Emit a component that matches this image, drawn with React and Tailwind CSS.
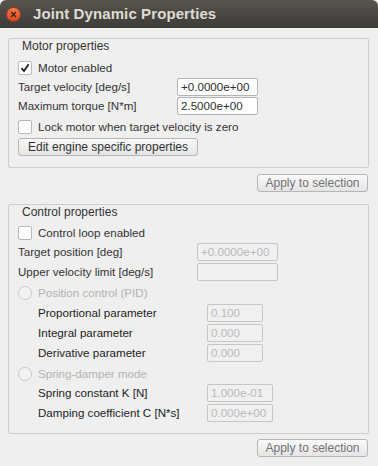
import React from "react";

const font = { fontFamily: '"Liberation Sans", Arial, sans-serif' };

// 复选框
function CheckBox({ checked }) {
    return (
        <span className="w-[14px] h-[14px] shrink-0 bg-white border border-[#b9b9b9] rounded-[2px] flex items-center justify-center">
            {checked && (
                <svg width="10" height="10" viewBox="0 0 10 10">
                    <path d="M1.5 5.2 L4 8 L8.6 1.2" fill="none" stroke="#1e1e1e" strokeWidth="1.8" />
                </svg>
            )}
        </span>
    );
}

function Radio() {
    return <span className="w-[14px] h-[14px] shrink-0 rounded-full border border-[#c9c9c9] bg-[#f3f3f3]" />;
}

function Field({ value, disabled, width = "w-[81px]" }) {
    return (
        <div
            className={`${width} h-[18px] rounded-[2px] border flex items-center px-[3px] text-[11.6px] leading-none ${
                disabled ? "border-[#c6c6c6] bg-[#f0f0f0] text-[#b9b9b9]" : "border-[#b3b3b3] bg-white text-[#2e2e2e]"
            }`}
        >
            {value}
        </div>
    );
}

function Button({ children, className = "", muted }) {
    return (
        <div
            className={`h-[18px] rounded-[3px] border border-[#b6b6b6] bg-gradient-to-b from-[#fafafa] to-[#e4e4e4] flex items-center justify-center text-[12px] leading-none ${
                muted ? "text-[#727272]" : "text-[#333]"
            } ${className}`}
        >
            {children}
        </div>
    );
}

function Row({ label, children, mt, indent, labelClass = "text-[#333]" }) {
    return (
        <div className={`flex items-center h-[18px] ${mt}`}>
            <span className={`text-[11.6px] ${indent ? "pl-[20px]" : ""} ${labelClass}`}>{label}</span>
            {children}
        </div>
    );
}

export default function App() {
    return (
        <div className="w-[378px] h-[466px] bg-[#efefef] flex flex-col" style={font}>
            {/* 标题栏 */}
            <div className="h-[28px] rounded-t-[6px] bg-gradient-to-b from-[#57544e] to-[#3d3c38] flex items-center">
                <div className="ml-[6px] w-[15px] h-[15px] rounded-full bg-gradient-to-b from-[#f37b4c] to-[#d9461a] border border-[#a8391a] flex items-center justify-center">
                    <svg width="7" height="7" viewBox="0 0 7 7">
                        <path d="M1 1 L6 6 M6 1 L1 6" stroke="#3b2118" strokeWidth="1.2" />
                    </svg>
                </div>
                <span className="ml-[12px] text-[15px] font-bold text-[#dfdbd2] tracking-[0.1px]">Joint Dynamic Properties</span>
            </div>

            <div className="pl-[8px] pr-[9px] pt-[10px] flex flex-col">
                {/* Motor properties */}
                <div className="border border-[#cdcdcd] rounded-[2px] pl-[9px] pr-[9px] pb-[11px] flex flex-col">
                    <div className="h-[14px] flex items-center pl-[4px] text-[12px] text-[#333]">Motor properties</div>
                    <div className="flex items-center h-[15px] mt-[7px] gap-[6px]">
                        <CheckBox checked />
                        <span className="text-[11.6px] text-[#333]">Motor enabled</span>
                    </div>
                    <Row label="Target velocity [deg/s]" mt="mt-[3px]">
                        <div className="ml-auto mr-[101px]"><Field value="+0.0000e+00" /></div>
                    </Row>
                    <Row label="Maximum torque [N*m]" mt="mt-[1px]">
                        <div className="ml-auto mr-[101px]"><Field value="2.5000e+00" /></div>
                    </Row>
                    <div className="flex items-center h-[14px] mt-[5px] gap-[6px]">
                        <CheckBox />
                        <span className="text-[11.6px] text-[#333]">Lock motor when target velocity is zero</span>
                    </div>
                    <Button className="mt-[4px] w-[180px]">Edit engine specific properties</Button>
                </div>

                <div className="flex justify-end mt-[6px]">
                    <Button muted className="w-[111px] mr-[1px]">Apply to selection</Button>
                </div>

                {/* Control properties */}
                <div className="mt-[12px] border border-[#cdcdcd] rounded-[2px] pl-[9px] pr-[9px] pb-[11px] flex flex-col">
                    <div className="h-[14px] flex items-center pl-[4px] text-[12px] text-[#333]">Control properties</div>
                    <div className="flex items-center h-[14px] mt-[7px] gap-[6px]">
                        <CheckBox />
                        <span className="text-[11.6px] text-[#333]">Control loop enabled</span>
                    </div>
                    <Row label="Target position [deg]" mt="mt-[3px]">
                        <div className="ml-auto mr-[81px]"><Field value="+0.0000e+00" disabled /></div>
                    </Row>
                    <Row label="Upper velocity limit [deg/s]" mt="mt-[2px]">
                        <div className="ml-auto mr-[81px]"><Field value="" disabled /></div>
                    </Row>
                    <div className="flex items-center h-[14px] mt-[5px] gap-[6px]">
                        <Radio />
                        <span className="text-[11.6px] text-[#b3b3b3]">Position control (PID)</span>
                    </div>
                    <Row label="Proportional parameter" mt="mt-[4px]" indent labelClass="text-[#222]">
                        <div className="ml-auto mr-[96px]"><Field value="0.100" disabled width="w-[56px]" /></div>
                    </Row>
                    <Row label="Integral parameter" mt="mt-[2px]" indent labelClass="text-[#222]">
                        <div className="ml-auto mr-[96px]"><Field value="0.000" disabled width="w-[56px]" /></div>
                    </Row>
                    <Row label="Derivative parameter" mt="mt-[2px]" indent labelClass="text-[#222]">
                        <div className="ml-auto mr-[96px]"><Field value="0.000" disabled width="w-[56px]" /></div>
                    </Row>
                    <div className="flex items-center h-[14px] mt-[5px] gap-[6px]">
                        <Radio />
                        <span className="text-[11.6px] text-[#b3b3b3]">Spring-damper mode</span>
                    </div>
                    <Row label="Spring constant K [N]" mt="mt-[3px]" indent labelClass="text-[#222]">
                        <div className="ml-auto mr-[86px]"><Field value="1.000e-01" disabled width="w-[66px]" /></div>
                    </Row>
                    <Row label="Damping coefficient C [N*s]" mt="mt-[2px]" indent labelClass="text-[#222]">
                        <div className="ml-auto mr-[86px]"><Field value="0.000e+00" disabled width="w-[66px]" /></div>
                    </Row>
                </div>

                <div className="flex justify-end mt-[5px]">
                    <Button muted className="w-[111px] mr-[1px]">Apply to selection</Button>
                </div>
            </div>
        </div>
    );
}
